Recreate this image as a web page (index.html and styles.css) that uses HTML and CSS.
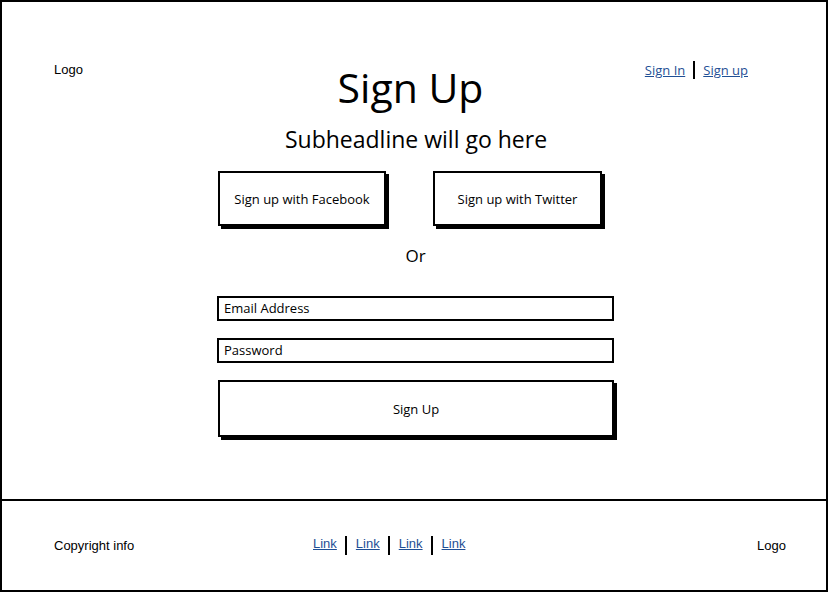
FILE: index.html
```html
<!DOCTYPE html>
<html>
<head>
<meta charset="utf-8">
<link rel="stylesheet" href="styles.css">
</head>
<body>
<div class="frame">
  <main class="main">
    <header class="top">
      <div class="logo">Logo</div>
      <h1 class="title">Sign Up</h1>
      <nav class="toplinks">
        <a href="#">Sign In</a><span class="sep"></span><a href="#">Sign up</a>
      </nav>
    </header>
    <h2 class="sub">Subheadline will go here</h2>
    <div class="col">
      <div class="social">
        <div class="btn fb">Sign up with Facebook</div>
        <div class="btn tw">Sign up with Twitter</div>
      </div>
      <div class="or">Or</div>
      <div class="field">Email Address</div>
      <div class="field pw">Password</div>
      <div class="btn submit">Sign Up</div>
    </div>
  </main>
  <footer class="foot">
    <div class="copy">Copyright info</div>
    <nav class="footlinks">
      <a href="#">Link</a><span class="sep"></span><a href="#">Link</a><span class="sep"></span><a href="#">Link</a><span class="sep"></span><a href="#">Link</a>
    </nav>
    <div class="flogo">Logo</div>
  </footer>
</div>
</body>
</html>
```

FILE: styles.css
```css
html, body {
  margin: 0;
  padding: 0;
  background: #fff;
}
body {
  font-family: "Open Sans", "DejaVu Sans", sans-serif;
  color: #000;
}
.frame {
  width: 828px;
}
.main {
  box-sizing: border-box;
  height: 501px;
  border: 2px solid #000;
  padding-top: 58px;
}
.top {
  display: grid;
  grid-template-columns: 1fr auto 1fr;
  align-items: start;
}
.logo {
  padding-left: 52px;
  margin-top: 2px;
  font-family: "Liberation Sans", Arial, sans-serif;
  font-size: 13px;
  line-height: 16px;
}
.title {
  margin: 5px 7px 0 0;
  font-size: 41px;
  line-height: 44px;
  font-weight: 400;
}
.toplinks {
  display: flex;
  justify-content: flex-end;
  align-items: center;
  gap: 8px;
  padding-right: 78px;
  margin-top: 1px;
  font-size: 13px;
  line-height: 18px;
}
.toplinks a, .footlinks a {
  color: #1f4f95;
  text-decoration: underline;
}
.sep {
  display: block;
  width: 2px;
  height: 18px;
  background: #000;
}
.sub {
  margin: 16px 0 0 0;
  text-align: center;
  font-size: 23px;
  line-height: 28px;
  font-weight: 400;
  padding-left: 4px;
}
.col {
  width: 397px;
  margin-left: 215px;
  display: flex;
  flex-direction: column;
}
.social {
  display: flex;
  gap: 47px;
  margin-top: 18px;
  padding-left: 1px;
}
.btn {
  box-sizing: border-box;
  border: 2px solid #000;
  box-shadow: 3px 3px 0 #000;
  display: flex;
  align-items: center;
  justify-content: center;
  font-size: 13px;
  background: #fff;
}
.fb {
  width: 168px;
  height: 55px;
}
.tw {
  width: 169px;
  height: 55px;
}
.or {
  margin-top: 20px;
  text-align: center;
  font-size: 17px;
  line-height: 20px;
}
.field {
  box-sizing: border-box;
  height: 25px;
  border: 2px solid #000;
  margin-top: 30px;
  padding-left: 5px;
  font-size: 13px;
  line-height: 20px;
}
.pw {
  margin-top: 17px;
}
.submit {
  margin-top: 17px;
  margin-left: 1px;
  height: 57px;
}
.foot {
  box-sizing: border-box;
  height: 91px;
  border: 2px solid #000;
  border-top: none;
  display: grid;
  grid-template-columns: 259px auto 1fr;
  align-items: center;
  padding: 0 40px 0 52px;
  font-family: "Liberation Sans", Arial, sans-serif;
  font-size: 13px;
}
.footlinks {
  display: flex;
  align-items: center;
  gap: 8.5px;
  margin-top: -4px;
}
.footlinks .sep {
  height: 19px;
  margin-top: 4px;
}
.flogo {
  justify-self: end;
}
```
